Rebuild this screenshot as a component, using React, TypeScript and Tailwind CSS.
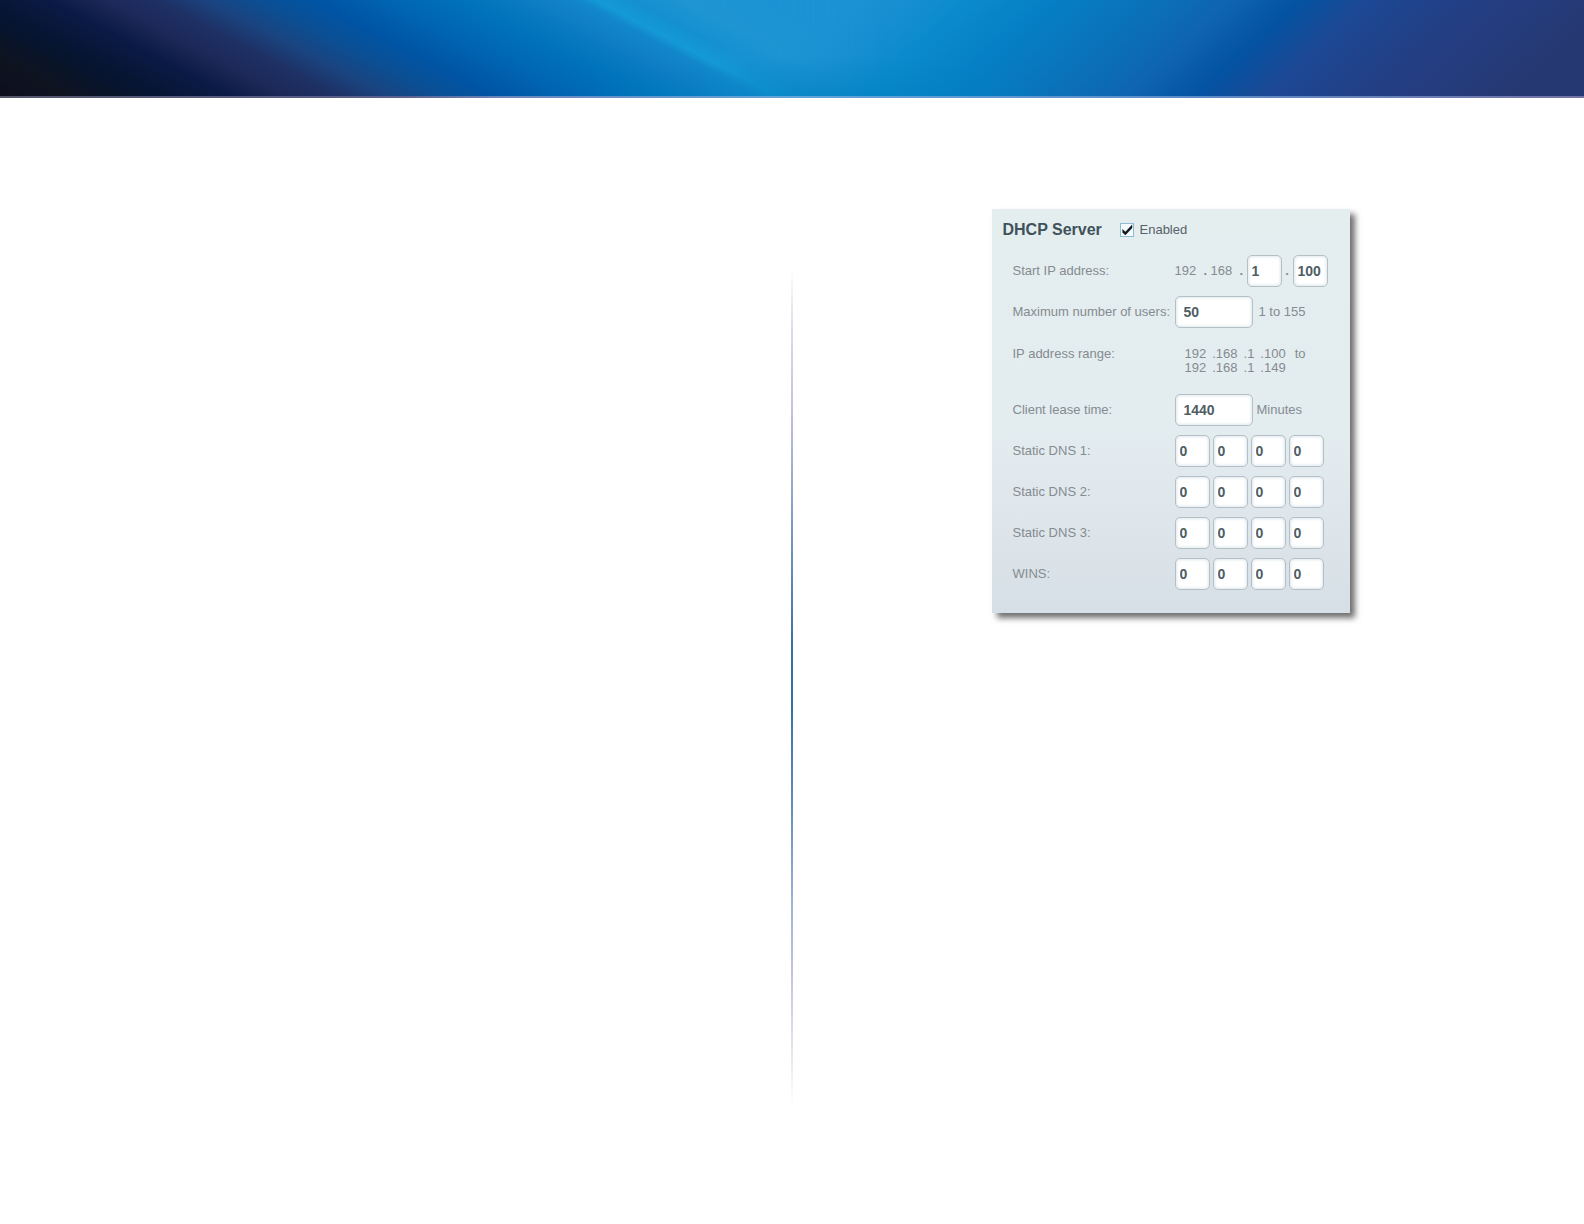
import React, { useState } from "react";

const inputBase =
  "h-8 rounded-[5px] border border-[#b4bfc6] bg-white text-sm font-bold text-[#4f5d63] shadow-[inset_0_0_3px_1px_#dfe8ec] outline-none focus:border-[#5b93b8]";

function Octet({ label, initial }: { label: string; initial: string }) {
  const [value, setValue] = useState(initial);
  return (
    <input
      aria-label={label}
      value={value}
      onChange={(e) => setValue(e.target.value)}
      className={`w-[35px] pl-1 ${inputBase}`}
    />
  );
}

function Field({ id, initial }: { id: string; initial: string }) {
  const [value, setValue] = useState(initial);
  return (
    <input
      id={id}
      value={value}
      onChange={(e) => setValue(e.target.value)}
      className={`w-[78px] pl-2 ${inputBase}`}
    />
  );
}

function Row({ label, htmlFor, children }: { label: string; htmlFor?: string; children: React.ReactNode }) {
  return (
    <div className="flex items-center">
      <label htmlFor={htmlFor} className="w-[162px] shrink-0 whitespace-nowrap">
        {label}
      </label>
      {children}
    </div>
  );
}

function AddressRow({ label }: { label: string }) {
  return (
    <Row label={`${label}:`}>
      <div className="flex gap-[3px]">
        {[1, 2, 3, 4].map((n) => (
          <Octet key={n} label={`${label} octet ${n}`} initial="0" />
        ))}
      </div>
    </Row>
  );
}

function Range({ last, suffix }: { last: string; suffix?: string }) {
  return (
    <div className="flex gap-[6px]">
      <span>192</span>
      <span>.168</span>
      <span>.1</span>
      <span>{last}</span>
      {suffix && <span className="pl-[3px]">{suffix}</span>}
    </div>
  );
}

function Banner() {
  return (
    <header>
      <div className="relative h-24 overflow-hidden bg-[linear-gradient(137deg,#1c93d3_44%,#1c93d3_50%,#178ed2_54%,#0b8bcd_57%,#0580c6_62%,#0a72ba_68%,#0f64b2_73%,#0353a2_77%,#1c4894_81%,#233f85_87%,#263872_96%)]">
        <div className="absolute inset-0 bg-[linear-gradient(28deg,#0d0e1e_0%,#0e1320_4%,#06142e_8%,#0a1a45_13%,#1c2858_16%,#1e3064_19%,#1a4480_22%,#0a4f94_25%,#0054a4_28%,#0064b2_32%,#0074bc_37%,#107fc6_41%,#1287cc_43%,#149ad6_44%,#1490d0_46%,#2095d2_49%,#1c93d3_54%)] [mask-image:linear-gradient(90deg,#000_44%,transparent_56%)]" />
        <div className="absolute inset-0 bg-[radial-gradient(ellipse_240px_50px_at_52%_110%,#0080c0b0,transparent)]" />
      </div>
      <div className="h-0.5 bg-[linear-gradient(90deg,#55556a,#5a5f8e_25%,#6b86bd_32%,#62a5d8_50%,#5d8cc6_75%,#7473a6)]" />
    </header>
  );
}

function DhcpPanel() {
  const [enabled, setEnabled] = useState(true);
  return (
    <section className="w-[358px] bg-[linear-gradient(180deg,#e4eeef_0%,#e3ecef_55%,#dde5ea_80%,#d6dfe6_100%)] pt-3 pr-5 pb-[23px] pl-[11px] text-[13px] leading-[14px] text-[#858b90] shadow-[5px_5px_6px_#00000090]">
      <div className="flex h-[18px] items-center">
        <h1 className="w-[117px] text-base leading-[18px] font-bold whitespace-nowrap text-[#41515b]">DHCP Server</h1>
        <label className="flex items-center gap-[6px] text-[#56616a]">
          <span className="relative flex size-[14px]">
            <input
              type="checkbox"
              checked={enabled}
              onChange={(e) => setEnabled(e.target.checked)}
              className="size-[14px] appearance-none border border-[#8dbdd2] bg-[#f4fbfd]"
            />
            {enabled && (
              <svg viewBox="0 0 14 14" className="pointer-events-none absolute inset-0 size-[14px]">
                <path d="M2.4 6 5.4 8.8 12.2 1.6V5L5.4 12.2 2.4 9.4Z" fill="#15191b" />
              </svg>
            )}
          </span>
          Enabled
        </label>
      </div>
      <div className="flex flex-col gap-[9px] pt-4 pl-[10px]">
        <Row label="Start IP address:">
          <div className="flex items-center">
            <span className="w-[29px]">192</span>
            <b className="w-[7px]">.</b>
            <span className="w-[29px]">168</span>
            <b className="w-[7px]">.</b>
            <Octet label="Start IP address octet 3" initial="1" />
            <b className="w-[11px] text-center">.</b>
            <Octet label="Start IP address octet 4" initial="100" />
          </div>
        </Row>
        <Row label="Maximum number of users:" htmlFor="max-users">
          <Field id="max-users" initial="50" />
          <span className="pl-[6px]">1 to 155</span>
        </Row>
        <div className="flex h-12 items-center">
          <span className="w-[172px] pb-[14px]">IP address range:</span>
          <div>
            <Range last=".100" suffix="to" />
            <Range last=".149" />
          </div>
        </div>
        <Row label="Client lease time:" htmlFor="lease-time">
          <Field id="lease-time" initial="1440" />
          <span className="pl-1">Minutes</span>
        </Row>
        <AddressRow label="Static DNS 1" />
        <AddressRow label="Static DNS 2" />
        <AddressRow label="Static DNS 3" />
        <AddressRow label="WINS" />
      </div>
    </section>
  );
}

export default function App() {
  return (
    <div className="flex min-h-screen flex-col bg-white font-['Liberation_Sans',Arial,sans-serif]">
      <Banner />
      <main className="grid grow grid-cols-[1fr_2px_1fr]">
        <div />
        <div className="mt-[170px] mb-[118px] bg-[linear-gradient(180deg,transparent,#d9d9e6_8%,#c3bddb_18%,#7f9dc4_30%,#3a70a8_45%,#3470a8_52%,#6089b8_63%,#9db4d6_76%,#cdc6e0_86%,#e4e4ea_93%,transparent)]" />
        <div className="flex items-start justify-center pt-[111px] pr-9">
          <DhcpPanel />
        </div>
      </main>
    </div>
  );
}
